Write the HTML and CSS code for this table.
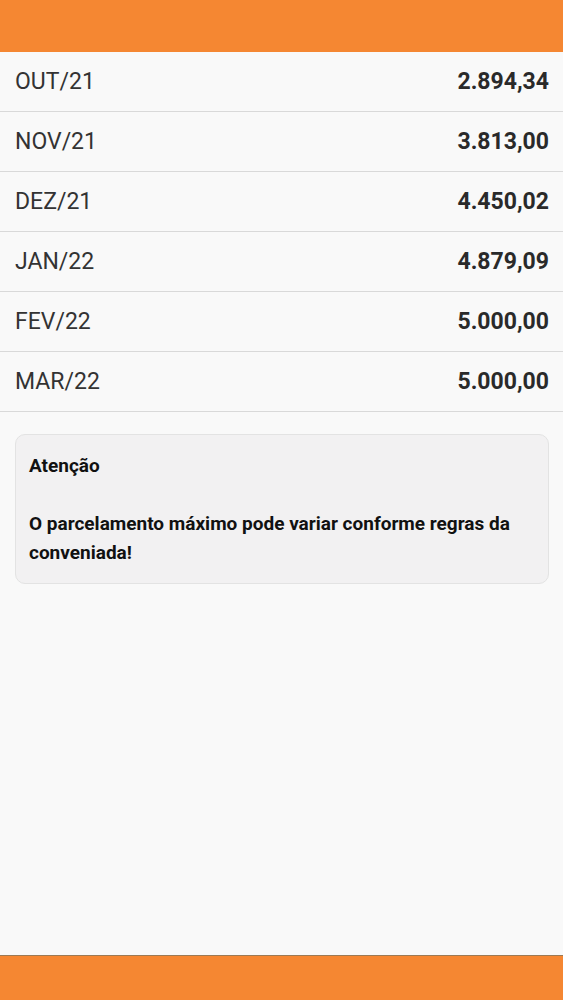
FILE: index.html
```html
<!DOCTYPE html>
<html lang="pt-BR">
<head>
<meta charset="utf-8">
<link rel="stylesheet" href="styles.css">
</head>
<body>
<div class="page">
  <header class="topbar"></header>
  <main class="content">
    <ul class="list">
      <li class="row"><span class="month">OUT/21</span><span class="value">2.894,34</span></li>
      <li class="row"><span class="month">NOV/21</span><span class="value">3.813,00</span></li>
      <li class="row"><span class="month">DEZ/21</span><span class="value">4.450,02</span></li>
      <li class="row"><span class="month">JAN/22</span><span class="value">4.879,09</span></li>
      <li class="row"><span class="month">FEV/22</span><span class="value">5.000,00</span></li>
      <li class="row"><span class="month">MAR/22</span><span class="value">5.000,00</span></li>
    </ul>
    <div class="notice">Atenção<br><br>O parcelamento máximo pode variar conforme regras da conveniada!</div>
  </main>
  <footer class="bottombar"></footer>
</div>
</body>
</html>
```
FILE: styles.css
```css
html, body {
  margin: 0;
  padding: 0;
  height: 100%;
}
body {
  background: #f9f9f9;
  font-family: Roboto, "Liberation Sans", sans-serif;
  color: #222;
}
.page {
  display: flex;
  flex-direction: column;
  height: 1000px;
}
.topbar {
  height: 52px;
  background: #f58732;
  flex: none;
}
.content {
  flex: 1;
}
.list {
  list-style: none;
  margin: 0;
  padding: 0;
}
.row {
  box-sizing: border-box;
  height: 60px;
  border-bottom: 1px solid #d9d9d9;
  display: flex;
  align-items: center;
  justify-content: space-between;
  padding: 0 14px 0 15px;
  font-size: 23px;
}
.month {
  color: #333;
}
.value {
  font-weight: 700;
  color: #2a2a2a;
}
.notice {
  margin: 22px 14px 0 15px;
  background: #f2f1f2;
  border: 1px solid #e3e3e3;
  border-radius: 10px;
  padding: 16px 13px 16px 13px;
  font-size: 19px;
  line-height: 29px;
  font-weight: 700;
  color: #111;
}
.bottombar {
  flex: none;
  height: 44px;
  background: #f58732;
  border-top: 1px solid #9c7a55;
}
```
